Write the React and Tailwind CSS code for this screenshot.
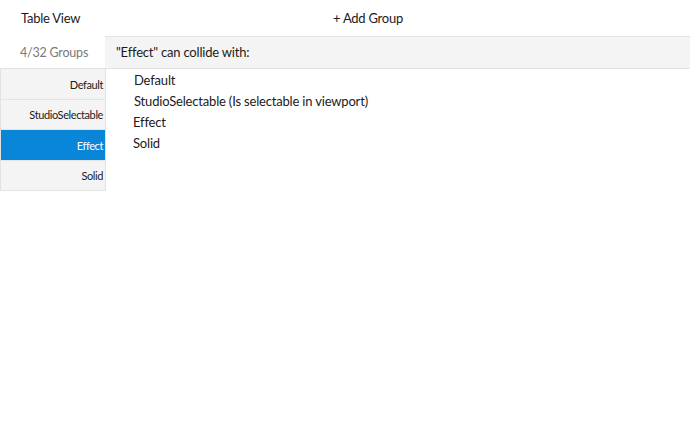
import React from "react";

const groups = [
  { t: "Default", h: "h-[31px]" },
  { t: "StudioSelectable", h: "h-[30px]" },
  { t: "Effect", h: "h-[31px]" },
  { t: "Solid", h: "h-[30px]" },
];
const collide = [
  { t: "Default", x: "pl-[29px]" },
  { t: "StudioSelectable (Is selectable in viewport)", x: "pl-[29px]" },
  { t: "Effect", x: "pl-[28px]" },
  { t: "Solid", x: "pl-[28px]" },
];

export default function App() {
  return (
    <div
      className="w-[690px] h-[433px] bg-white text-[#1b1b1b] overflow-hidden"
      style={{ fontFamily: '"Lato", "Noto Sans", sans-serif' }}
    >
      <div className="h-[36px] flex items-center pt-[2px] tracking-[-0.25px]">
        <div className="w-[105px] pl-[21px] text-[13px]">Table View</div>
        <div className="flex-1 flex justify-center pr-[59px] text-[13px]">+ Add Group</div>
      </div>
      <div className="flex">
        <div className="w-[106px] shrink-0">
          <div className="h-[32px] flex items-center justify-center pl-[2px] pt-[3px] text-[12.5px] text-[#7a7a7a] tracking-[-0.2px]">
            4/32 Groups
          </div>
          <div className="border-l border-t border-r border-[#e2e2e2]">
            {groups.map((g) => (
              <div
                key={g.t}
                className={
                  g.h +
                  " flex items-center justify-end pr-[2px] pt-[2px] text-[11px] tracking-[-0.4px] border-b border-[#e4e4e4] " +
                  (g.t === "Effect"
                    ? "bg-[#0a86d9] text-white"
                    : "bg-[#f4f4f4] text-[#1b1b1b]")
                }
              >
                {g.t}
              </div>
            ))}
          </div>
        </div>
        <div className="flex-1 -ml-[1px]">
          <div className="h-[33px] bg-[#f4f4f4] border-t border-b border-[#e3e3e3] flex items-center pl-[11px] pt-[1px] text-[13px] tracking-[-0.2px]">
            "Effect" can collide with:
          </div>
          <div className="pt-[1px] tracking-[-0.18px]">
            {collide.map((c) => (
              <div key={c.t} className={"h-[21px] flex items-center text-[13px] " + c.x}>
                {c.t}
              </div>
            ))}
          </div>
        </div>
      </div>
    </div>
  );
}
